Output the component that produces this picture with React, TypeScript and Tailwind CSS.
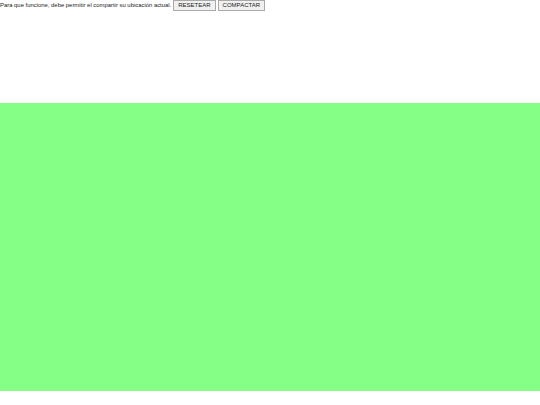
export default function App() {
  return (
    <div className="bg-white" style={{ fontFamily: '"Liberation Sans", Arial, sans-serif' }}>
      <div className="flex h-[103px] items-start gap-[2px] text-[5.9px] leading-[11px] text-[#222]">
        <span>Para que funcione, debe permitir el compartir su ubicación actual.</span>
        <button className="h-[11px] border border-[#aaa] bg-[#f0f0f0] px-[4px] text-[6px] leading-[9px] text-[#222]">
          RESETEAR
        </button>
        <button className="h-[11px] border border-[#aaa] bg-[#f0f0f0] px-[4px] text-[6px] leading-[9px] text-[#222]">
          COMPACTAR
        </button>
      </div>
      <div className="h-[288px] w-full bg-[#85ff85]" />
    </div>
  );
}
